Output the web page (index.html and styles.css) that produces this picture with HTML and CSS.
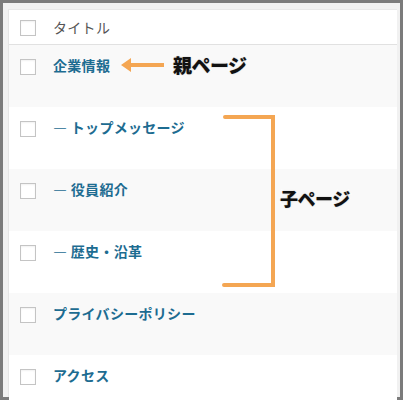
FILE: index.html
```html
<!DOCTYPE html>
<html lang="ja">
<head>
<meta charset="utf-8">
<link rel="stylesheet" href="styles.css">
</head>
<body>
<div class="frame">
  <div class="table">
    <div class="head">
      <span class="cb"></span>
      <span class="htitle">タイトル</span>
    </div>
    <div class="row alt"><span class="cb"></span><a class="title">企業情報</a></div>
    <div class="row"><span class="cb"></span><a class="title">— トップメッセージ</a></div>
    <div class="row alt"><span class="cb"></span><a class="title">— 役員紹介</a></div>
    <div class="row"><span class="cb"></span><a class="title">— 歴史・沿革</a></div>
    <div class="row alt"><span class="cb"></span><a class="title">プライバシーポリシー</a></div>
    <div class="row last"><span class="cb"></span><a class="title">アクセス</a></div>
  </div>

  <svg class="arrow" width="50" height="20" viewBox="0 0 50 20">
    <path d="M3 10 L13 3 L13 8 L46 8 L46 12 L13 12 L13 17 Z" fill="#f4a653"/>
  </svg>
  <span class="label parent">親ページ</span>

  <svg class="bracket" width="60" height="176" viewBox="0 0 60 176">
    <path d="M6 3 L54 3 L54 171 L5 171" fill="none" stroke="#f4a653" stroke-width="4" stroke-linecap="round" stroke-linejoin="miter"/>
  </svg>
  <span class="label child">子ページ</span>
</div>
</body>
</html>
```
FILE: styles.css
```css
* { box-sizing: border-box; }
html, body { margin: 0; padding: 0; }
body {
  width: 403px;
  height: 400px;
  overflow: hidden;
  font-family: "Noto Sans CJK JP", "Noto Sans", sans-serif;
}
.frame {
  position: relative;
  width: 403px;
  height: 400px;
  border: 3px solid #7b7b7b;
  background: #f1f1f1;
  padding: 6px 3px 0 5px;
}
.table {
  background: #fff;
  border-left: 1px solid #e5e5e5;
  border-top: 1px solid #e8e8e8;
  height: 100%;
}
.head {
  height: 35px;
  display: flex;
  align-items: center;
  padding-left: 11px;
  border-bottom: 1px solid #e1e1e1;
}
.head .cb { margin-top: 1px; }
.htitle {
  margin-left: 17px;
  margin-top: -1px;
  font-size: 14px;
  color: #555;
  letter-spacing: 0.3px;
}
.cb {
  width: 16px;
  height: 16px;
  border: 1px solid #c4c4c4;
  background: #fff;
  flex: none;
  box-shadow: inset 0 1px 2px rgba(0,0,0,0.06);
}
.row {
  height: 62px;
  display: flex;
  align-items: flex-start;
  padding: 12px 0 0 11px;
  background: #fff;
}
.row.alt { background: #f9f9f9; }
.row .cb { margin-top: 2px; }
.title {
  margin-left: 17px;
  margin-top: -2px;
  font-size: 14px;
  font-weight: 700;
  color: #1d6c91;
  line-height: 20px;
  letter-spacing: 0.3px;
}
.arrow {
  position: absolute;
  left: 115px;
  top: 52px;
}
.bracket {
  position: absolute;
  left: 216px;
  top: 111px;
}
.label {
  position: absolute;
  font-size: 19px;
  font-weight: 900;
  color: #111;
  -webkit-text-stroke: 3px #fff;
  paint-order: stroke fill;
  letter-spacing: -0.5px;
  line-height: 20px;
  text-shadow: 0 0 2px rgba(0,0,0,0.3);
}
.label.parent { left: 170px; top: 52px; }
.label.child { left: 277px; top: 185px; font-size: 18px; }
```
